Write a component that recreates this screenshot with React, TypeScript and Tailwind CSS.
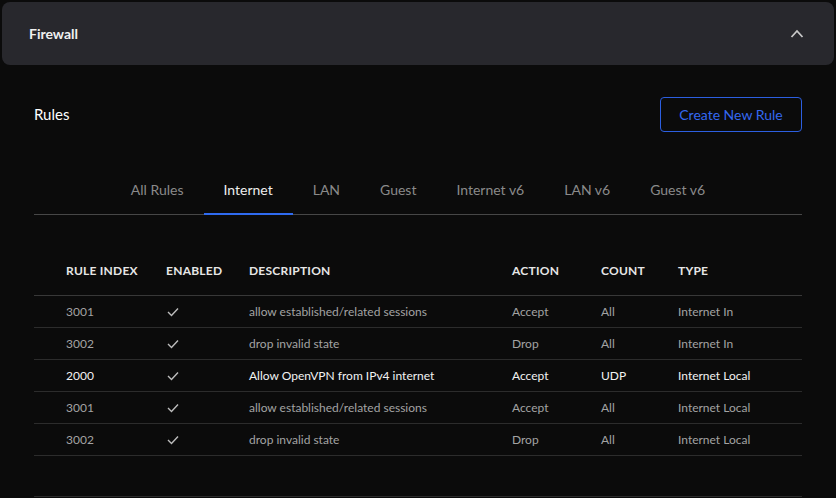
import type { ReactNode } from "react";

const TABS = ["All Rules", "Internet", "LAN", "Guest", "Internet v6", "LAN v6", "Guest v6"];

const RULES = [
  { index: "3001", desc: "allow established/related sessions", action: "Accept", count: "All", type: "Internet In" },
  { index: "3002", desc: "drop invalid state", action: "Drop", count: "All", type: "Internet In" },
  { index: "2000", desc: "Allow OpenVPN from IPv4 internet", action: "Accept", count: "UDP", type: "Internet Local", custom: true },
  { index: "3001", desc: "allow established/related sessions", action: "Accept", count: "All", type: "Internet Local" },
  { index: "3002", desc: "drop invalid state", action: "Drop", count: "All", type: "Internet Local" },
];

function Check() {
  return (
    <svg width="12" height="10" viewBox="0 0 12 10" fill="none">
      <polyline points="1,5 4.5,8.5 11,1.5" stroke="currentColor" strokeWidth="1.4" />
    </svg>
  );
}

function Row({ cells, className }: { cells: ReactNode[]; className: string }) {
  const widths = ["w-[100px]", "w-[83px]", "w-[263px]", "w-[89px]", "w-[77px]", "flex-1"];
  return (
    <div className={`flex items-center pl-8 border-b border-[#2c2c2c] ${className}`}>
      {cells.map((c, i) => (
        <div key={i} className={`${widths[i]} shrink-0`}>
          {c}
        </div>
      ))}
    </div>
  );
}

export default function App() {
  return (
    <div className="min-h-[498px] w-[836px] overflow-hidden bg-[#0b0b0b] p-[2px] font-['Lato','Liberation_Sans',sans-serif]">
      <header className="flex h-[63px] items-center justify-between rounded-lg bg-[#28282d] pl-[27px] pr-[30px]">
        <h1 className="text-sm font-bold text-[#f0f0f0]">Firewall</h1>
        <svg width="14" height="9" viewBox="0 0 14 9" fill="none" className="text-[#c8c8c8]">
          <polyline points="1.5,8 7,2 12.5,8" stroke="currentColor" strokeWidth="1.8" />
        </svg>
      </header>

      <div className="px-8">
        <div className="mt-8 flex h-[35px] items-center justify-between">
          <h2 className="text-[15px] text-white">Rules</h2>
          <button className="h-[35px] w-[142px] rounded border border-[#2c5fe0] text-sm text-[#3468f0]">
            Create New Rule
          </button>
        </div>

        <nav className="mt-[35px] flex justify-center border-b border-[#474747]">
          {TABS.map((t) => (
            <div
              key={t}
              className={`-mb-px flex h-12 items-center border-b-2 px-5 text-sm ${
                t === "Internet" ? "border-[#2f6bf0] text-[#eeeeee]" : "border-transparent text-[#8a8a8a]"
              }`}
            >
              {t}
            </div>
          ))}
        </nav>

        <div className="mt-8">
          <Row
            className="h-[49px] text-xs font-bold uppercase tracking-[0.02em] text-[#e6e6e6] border-[#383838]"
            cells={["Rule Index", "Enabled", "Description", "Action", "Count", "Type"]}
          />
          {RULES.map((r, i) => (
            <Row
              key={i}
              className={`h-8 text-xs ${r.custom ? "text-[#f2f2f2]" : "text-[#a3a3a3]"}`}
              cells={[
                r.index,
                <span className="flex pl-[1px] text-[#bdbdbd]">
                  <Check />
                </span>,
                r.desc,
                r.action,
                r.count,
                r.type,
              ]}
            />
          ))}
        </div>

        <div className="mt-10 border-b border-[#2c2c2c]" />
      </div>
    </div>
  );
}
